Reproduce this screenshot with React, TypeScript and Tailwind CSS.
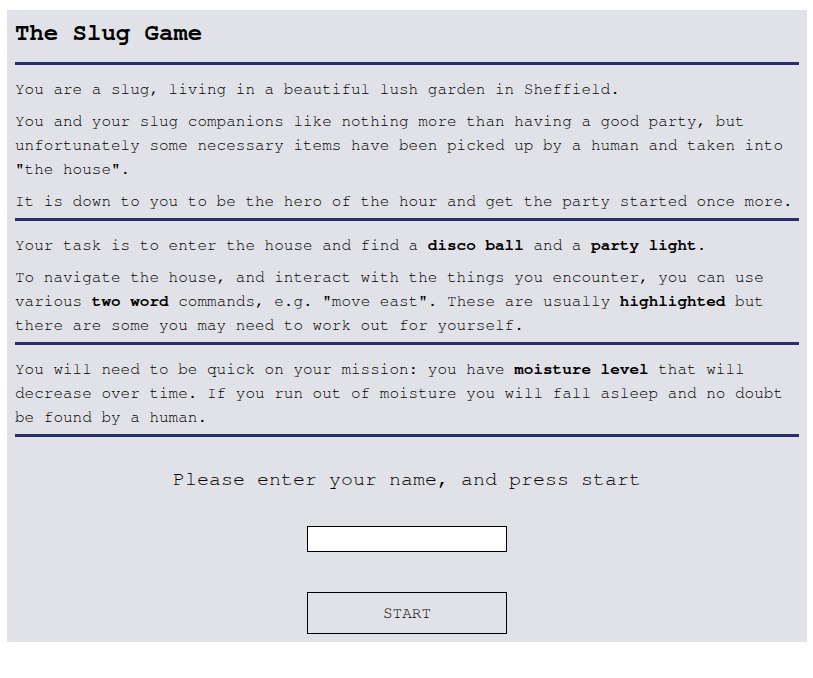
import { useState } from "react";

const mono = "font-['Nimbus_Mono_PS','FreeMono','Courier_New','Courier','Liberation_Mono',monospace]";

function Rule() {
  return <div className="h-[3px] w-full bg-[#252f6e]" />;
}

function Section({ children }: { children: React.ReactNode }) {
  return <div className="flex flex-col gap-2 pt-[12px] pb-[5px]">{children}</div>;
}

export default function App() {
  const [name, setName] = useState("");

  return (
    <div className={`min-h-screen bg-white pt-[10px] pl-[7px] ${mono}`}>
      <div className="w-[800px] bg-[#e1e2e7] px-2 pt-[7px] pb-[8px] text-[16px] leading-[24px] text-black">
        <h1 className="mb-[13px] text-[24px] font-bold leading-[32px]">The Slug Game</h1>
        <Rule />

        <Section>
          <p>You are a slug, living in a beautiful lush garden in Sheffield.</p>
          <p>
            You and your slug companions like nothing more than having a good party, but
            unfortunately some necessary items have been picked up by a human and taken into
            "the house".
          </p>
          <p>It is down to you to be the hero of the hour and get the party started once more.</p>
        </Section>
        <Rule />

        <Section>
          <p>
            Your task is to enter the house and find a <b>disco ball</b> and a <b>party light</b>.
          </p>
          <p>
            To navigate the house, and interact with the things you encounter, you can use
            various <b>two word</b> commands, e.g. "move east". These are usually{" "}
            <b>highlighted</b> but there are some you may need to work out for yourself.
          </p>
        </Section>
        <Rule />

        <Section>
          <p>
            You will need to be quick on your mission: you have <b>moisture level</b> that will
            decrease over time. If you run out of moisture you will fall asleep and no doubt
            be found by a human.
          </p>
        </Section>
        <Rule />

        <div className="flex flex-col items-center pt-[28px]">
          <p className="text-[20px] leading-[28px]">Please enter your name, and press start</p>
          <input
            value={name}
            onChange={(e) => setName(e.target.value)}
            className="mt-[33px] h-[26px] w-[200px] border border-black bg-white px-1 outline-none"
          />
          <button className="mt-[40px] h-[42px] w-[200px] border border-black bg-transparent text-[16px] text-black">
            START
          </button>
        </div>
      </div>
    </div>
  );
}
